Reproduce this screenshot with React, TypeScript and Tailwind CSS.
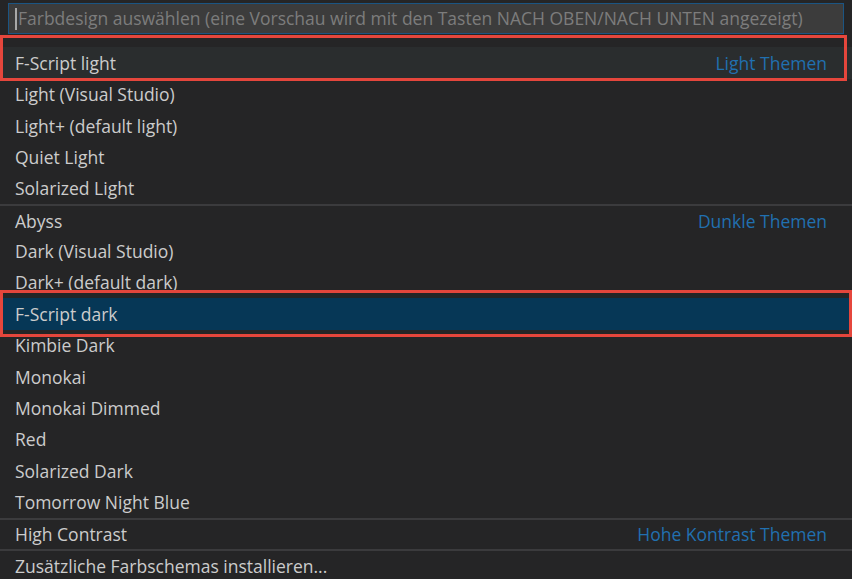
import React from "react";

type Row = {
  label: string;
  group?: string;
  separator?: boolean;
  state?: "hover" | "selected";
};

const rows: Row[] = [
  { label: "F-Script light", group: "Light Themen", state: "hover" },
  { label: "Light (Visual Studio)" },
  { label: "Light+ (default light)" },
  { label: "Quiet Light" },
  { label: "Solarized Light" },
  { label: "Abyss", group: "Dunkle Themen", separator: true },
  { label: "Dark (Visual Studio)" },
  { label: "Dark+ (default dark)" },
  { label: "F-Script dark", state: "selected" },
  { label: "Kimbie Dark" },
  { label: "Monokai" },
  { label: "Monokai Dimmed" },
  { label: "Red" },
  { label: "Solarized Dark" },
  { label: "Tomorrow Night Blue" },
  { label: "High Contrast", group: "Hohe Kontrast Themen", separator: true },
  { label: "Zusätzliche Farbschemas installieren...", separator: true },
];

function ThemeRow({ row }: { row: Row }) {
  const bg =
    row.state === "selected"
      ? "bg-[#063756]"
      : row.state === "hover"
        ? "bg-[#2a2d2e]"
        : "";
  return (
    <div
      className={`flex h-[31.375px] items-center justify-between pl-[15px] pr-[25px] ${bg} ${
        row.separator ? "border-t-2 border-[#3b3b3d]" : ""
      }`}
    >
      <span className="text-[#cccccc]">{row.label}</span>
      {row.group && <span className="text-[#2170b0]">{row.group}</span>}
    </div>
  );
}

export default function App() {
  return (
    <div
      className="relative h-[579px] w-[852px] overflow-hidden bg-[#252526] text-[17.5px]"
      style={{ fontFamily: '"Open Sans", "Noto Sans", sans-serif' }}
    >
      <div className="px-2 pt-[3px]">
        <div className="flex h-[31px] items-center border border-[#1b5583] bg-[#3c3c3c] pl-[6px]">
          <div className="mr-px h-[22px] w-[2px] bg-[#a8a8a8]" />
          <span className="whitespace-nowrap text-[#7c7c7c]">
            Farbdesign auswählen (eine Vorschau wird mit den Tasten NACH
            OBEN/NACH UNTEN angezeigt)
          </span>
        </div>
      </div>

      <div className="pt-[13.3px]">
        {rows.map((row) => (
          <ThemeRow key={row.label} row={row} />
        ))}
      </div>

      {/* annotation frames */}
      <div className="pointer-events-none absolute left-0 top-[35px] h-[46px] w-[847px] border-[3.5px] border-[#e5463c]" />
      <div className="pointer-events-none absolute left-0 top-[290px] h-[47px] w-[852px] border-[3.5px] border-[#e5463c]" />
    </div>
  );
}
